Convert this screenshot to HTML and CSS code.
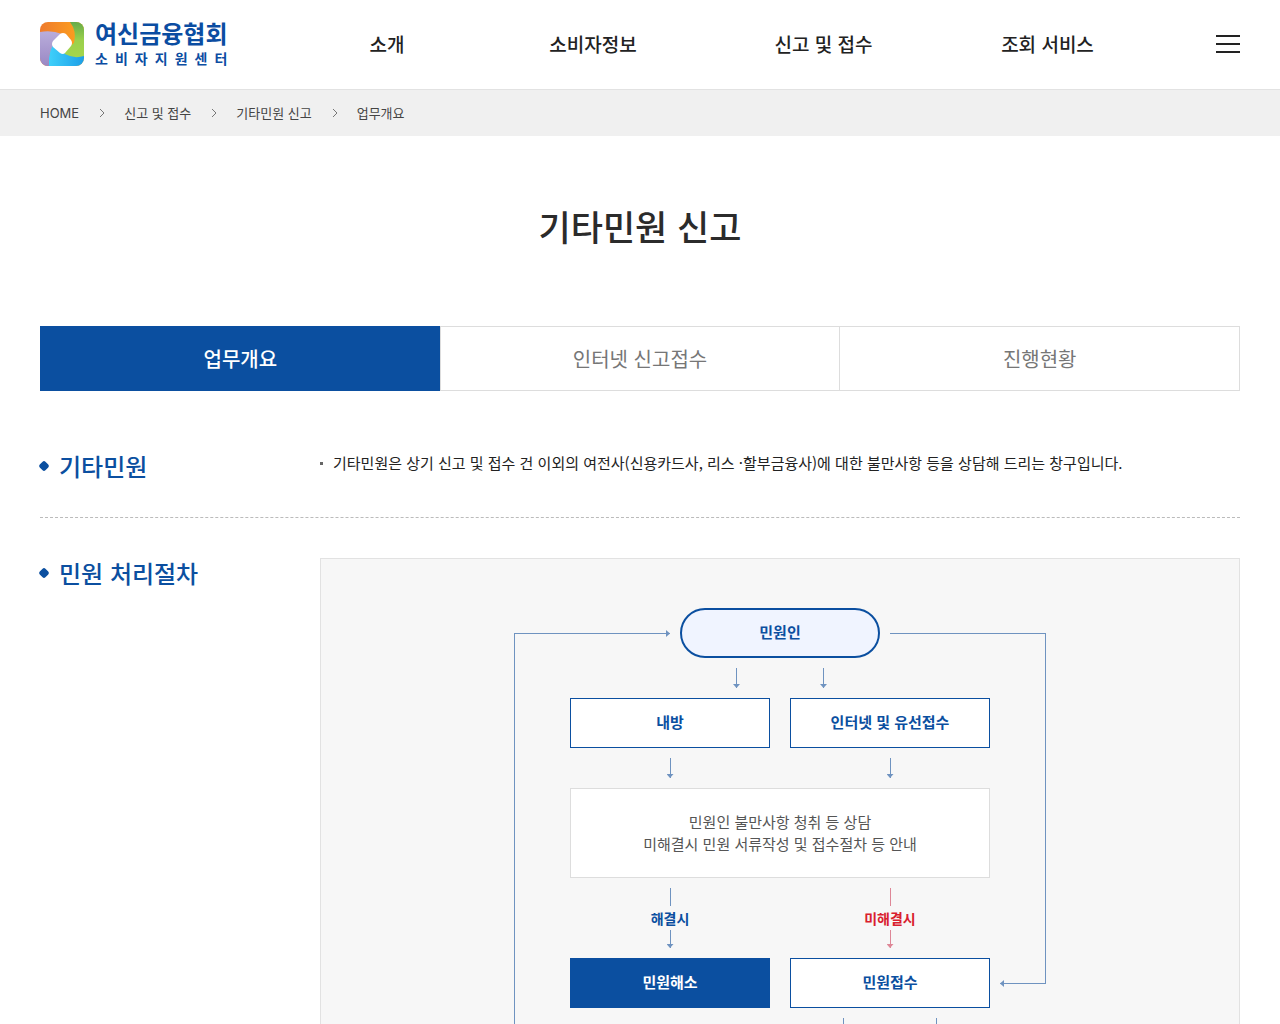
FILE: index.html
```html
<!DOCTYPE html>
<html lang="ko">
<head>
    <meta charset="UTF-8">
    <meta name="viewport" content="width=device-width, initial-scale=1.0">
    <title>기타민원 신고 - 여신금융협회 소비자지원센터</title>
    <link rel="stylesheet" href="styles.css">
</head>
<body>
    <header class="header">
        <a class="logo" href="#">
            <svg class="logo-mark" viewBox="0 0 44 44" aria-hidden="true">
                <defs>
                    <clipPath id="mark"><rect width="44" height="44" rx="8"/></clipPath>
                    <linearGradient id="orange" x1="0" y1="0" x2="1" y2="0">
                        <stop offset="0" stop-color="#ee7a2c"/>
                        <stop offset="1" stop-color="#ffa51c"/>
                    </linearGradient>
                    <linearGradient id="green" x1="0" y1="0" x2="0" y2="1">
                        <stop offset="0" stop-color="#66ab48"/>
                        <stop offset="0.5" stop-color="#9ad04c"/>
                        <stop offset="1" stop-color="#a5d64c"/>
                    </linearGradient>
                    <linearGradient id="blue" x1="0" y1="0" x2="1" y2="0">
                        <stop offset="0" stop-color="#3fd0fa"/>
                        <stop offset="1" stop-color="#1d9fe8"/>
                    </linearGradient>
                    <linearGradient id="purple" x1="0" y1="0" x2="0" y2="1">
                        <stop offset="0" stop-color="#b9addb"/>
                        <stop offset="1" stop-color="#9a88c4"/>
                    </linearGradient>
                </defs>
                <g clip-path="url(#mark)">
                    <rect width="44" height="44" fill="url(#orange)"/>
                    <path d="M30 0H44V36H22V30L34 21Q37 9 30 0Z" fill="url(#green)"/>
                    <path d="M44 34V44H9Q8 32 12 23L22 28L25 32Q34 37 44 34Z" fill="url(#blue)"/>
                    <path d="M0 10Q12 8 22 12L22 20L13 23Q8 32 9 44H0Z" fill="url(#purple)"/>
                    <path d="M20 12Q23 10 26 12L31 18Q33 21 31 24L25 31Q23 33 20 31L13 25Q11 22 13 19Z" fill="#fff"/>
                </g>
            </svg>
            <span class="logo-text">
                <strong>여신금융협회</strong>
                <span class="logo-sub"><b>소</b><b>비</b><b>자</b><b>지</b><b>원</b><b>센</b><b>터</b></span>
            </span>
        </a>
        <nav class="gnb">
            <a href="#">소개</a>
            <a href="#">소비자정보</a>
            <a href="#">신고 및 접수</a>
            <a href="#">조회 서비스</a>
        </nav>
        <button class="menu-btn" type="button" aria-label="전체메뉴"><span></span><span></span><span></span></button>
    </header>

    <nav class="breadcrumb" aria-label="현재 위치">
        <a class="home" href="#">HOME</a>
        <svg viewBox="0 0 7 10" aria-hidden="true"><path d="M2 1L6 5L2 9"/></svg>
        <a href="#">신고 및 접수</a>
        <svg viewBox="0 0 7 10" aria-hidden="true"><path d="M2 1L6 5L2 9"/></svg>
        <a href="#">기타민원 신고</a>
        <svg viewBox="0 0 7 10" aria-hidden="true"><path d="M2 1L6 5L2 9"/></svg>
        <a href="#">업무개요</a>
    </nav>

    <main class="content">
        <h1>기타민원 신고</h1>

        <nav class="tabs">
            <a class="on" href="#">업무개요</a>
            <a href="#">인터넷 신고접수</a>
            <a href="#">진행현황</a>
        </nav>

        <section class="row">
            <h2>기타민원</h2>
            <ul class="list">
                <li>기타민원은 상기 신고 및 접수 건 이외의 여전사(신용카드사, 리스 ·할부금융사)에 대한 불만사항 등을 상담해 드리는 창구입니다.</li>
            </ul>
        </section>

        <section class="row">
            <h2>민원 처리절차</h2>
            <div class="flow-box">
                <div class="flow">
                    <!-- 좌우 연결선 -->
                    <div class="loop loop-left"></div>
                    <div class="loop loop-right"></div>

                    <div class="node start">민원인</div>
                    <div class="arrows near"><i class="arrow"></i><i class="arrow"></i></div>
                    <div class="pair">
                        <div class="node">내방</div>
                        <div class="node">인터넷 및 유선접수</div>
                    </div>
                    <div class="arrows"><i class="arrow"></i><i class="arrow"></i></div>
                    <div class="node note">민원인 불만사항 청취 등 상담<br>미해결시 민원 서류작성 및 접수절차 등 안내</div>
                    <div class="pair">
                        <div class="branch"><i class="line"></i><span>해결시</span><i class="arrow"></i></div>
                        <div class="branch red"><i class="line"></i><span>미해결시</span><i class="arrow"></i></div>
                    </div>
                    <div class="pair">
                        <div class="node fill">민원해소</div>
                        <div class="node">민원접수</div>
                    </div>
                    <div class="pair">
                        <div></div>
                        <div class="arrows last"><i class="arrow"></i><i class="arrow"></i></div>
                    </div>
                </div>
            </div>
        </section>
    </main>
</body>
</html>
```
FILE: styles.css
```css
* {
    margin: 0;
    padding: 0;
    box-sizing: border-box;
}

body {
    font-family: "Noto Sans CJK KR", "Noto Sans", sans-serif;
    font-size: 15px;
    line-height: 22px;
    color: #222;
    background: #fff;
}

a {
    color: inherit;
    text-decoration: none;
}

ul {
    list-style: none;
}

/* header */
.header {
    display: flex;
    align-items: center;
    height: 90px;
    padding: 0 40px 2px;
    border-bottom: 1px solid #e2e2e2;
}

.logo {
    display: flex;
    gap: 11px;
    width: 252px;
    color: #0b4da2;
}

.logo-mark {
    width: 44px;
    height: 44px;
}

.logo-text {
    display: flex;
    flex-direction: column;
    justify-content: space-between;
}

.logo-text strong {
    font-size: 24px;
    line-height: 22px;
    font-weight: 700;
}

.logo-sub {
    display: flex;
    justify-content: space-between;
    font-size: 14px;
    line-height: 16px;
}

.gnb {
    flex: 1;
    display: grid;
    grid-template-columns: 190fr 222fr 239fr 209fr;
    margin-right: 64px;
    font-size: 19px;
    font-weight: 500;
    text-align: center;
}

.menu-btn {
    display: flex;
    flex-direction: column;
    gap: 6px;
    width: 24px;
    border: 0;
    background: none;
    cursor: pointer;
}

.menu-btn span {
    width: 100%;
    height: 2px;
    background: #222;
}

/* breadcrumb */
.breadcrumb {
    display: flex;
    align-items: center;
    gap: 19px;
    height: 46px;
    padding: 0 40px;
    background: #f0f0f0;
    font-size: 13px;
    color: #444;
}

.breadcrumb .home {
    font-family: Inter, sans-serif;
}

.breadcrumb svg {
    width: 7px;
    height: 10px;
    fill: none;
    stroke: #777;
}

/* content */
.content {
    padding: 63px 40px 60px;
}

h1 {
    font-size: 35px;
    line-height: 54px;
    font-weight: 500;
    text-align: center;
    color: #2b2b2b;
}

.tabs {
    display: flex;
    margin-top: 73px;
}

.tabs a {
    flex: 1;
    height: 65px;
    border: 1px solid #ddd;
    border-right: 0;
    font-size: 20px;
    line-height: 64px;
    text-align: center;
    color: #767676;
}

.tabs a:last-child {
    border-right: 1px solid #ddd;
}

.tabs .on {
    border-color: #0b4fa0;
    background: #0b4fa0;
    color: #fff;
    font-weight: 500;
}

.row {
    display: flex;
    padding: 40px 0;
}

.tabs + .row {
    padding: 60px 0 36px;
    border-bottom: 1px dashed #bbb;
}

h2 {
    display: flex;
    align-items: center;
    gap: 11px;
    width: 280px;
    height: 30px;
    font-size: 24px;
    font-weight: 500;
    color: #0b4fa0;
}

h2::before {
    content: "";
    width: 8px;
    height: 8px;
    border-radius: 2px;
    background: #0b4fa0;
    transform: rotate(45deg);
}

.list {
    flex: 1;
    line-height: 24px;
}

.list li {
    display: flex;
    gap: 10px;
}

.list li::before {
    content: "";
    width: 3px;
    height: 3px;
    margin-top: 11px;
    background: #666;
}

/* flow chart */
.flow-box {
    flex: 1;
    padding: 49px 0;
    border: 1px solid #e2e2e2;
    background: #f7f7f7;
}

.flow {
    position: relative;
    width: 420px;
    margin: 0 auto;
}

.node {
    display: flex;
    align-items: center;
    justify-content: center;
    min-height: 50px;
    padding-bottom: 2px;
    border: 1px solid #0b4fa0;
    background: #fff;
    font-weight: 700;
    text-align: center;
    color: #0b4fa0;
}

.node.start {
    width: 200px;
    margin: 0 auto;
    border-width: 2px;
    border-radius: 25px;
    background: #f0f4ff;
}

.node.note {
    min-height: 90px;
    padding-bottom: 0;
    border-color: #ddd;
    font-weight: 400;
    color: #555;
}

.node.fill {
    background: #0b4fa0;
    color: #fff;
}

.pair {
    display: grid;
    grid-template-columns: 1fr 1fr;
    gap: 20px;
}

.arrows {
    display: flex;
    justify-content: space-around;
    gap: 20px;
    padding: 10px 0;
}

.arrows.near {
    justify-content: center;
    gap: 80px;
}

.arrow {
    display: block;
    width: 7px;
    height: 20px;
    background: linear-gradient(#6f93c0, #6f93c0) center top / 1px 100% no-repeat;
}

.arrow::after {
    content: "";
    display: block;
    height: 100%;
    background: #6f93c0;
    clip-path: polygon(0 16px, 100% 16px, 50% 100%);
}

.line {
    width: 1px;
    height: 18px;
    background: #6f93c0;
}

.branch {
    display: flex;
    flex-direction: column;
    align-items: center;
    padding: 10px 0;
    font-size: 14px;
    line-height: 24px;
    font-weight: 700;
    color: #0b4fa0;
}

.branch .arrow {
    height: 18px;
}

.branch .arrow::after {
    clip-path: polygon(0 14px, 100% 14px, 50% 100%);
}

.red {
    color: #d9202e;
}

.red .line,
.red .arrow::after {
    background: #de8797;
}

.red .arrow {
    background-image: linear-gradient(#de8797, #de8797);
}

.arrows.last {
    justify-content: center;
    gap: 86px;
}

.loop {
    position: absolute;
    top: 25px;
    width: 156px;
    border-top: 1px solid #6f93c0;
}

.loop-left {
    right: 320px;
    bottom: 0;
    border-left: 1px solid #6f93c0;
}

.loop-right {
    left: 320px;
    height: 351px;
    border-right: 1px solid #6f93c0;
}

.loop-right::before {
    content: "";
    position: absolute;
    right: 0;
    bottom: 0;
    width: 45px;
    height: 1px;
    background: #6f93c0;
}

.loop-left::after,
.loop-right::after {
    content: "";
    position: absolute;
    width: 4px;
    height: 7px;
    background: #6f93c0;
}

.loop-left::after {
    top: -4px;
    right: 0;
    clip-path: polygon(0 0, 100% 50%, 0 100%);
}

.loop-right::after {
    right: 41px;
    bottom: -3px;
    clip-path: polygon(100% 0, 0 50%, 100% 100%);
}
```
